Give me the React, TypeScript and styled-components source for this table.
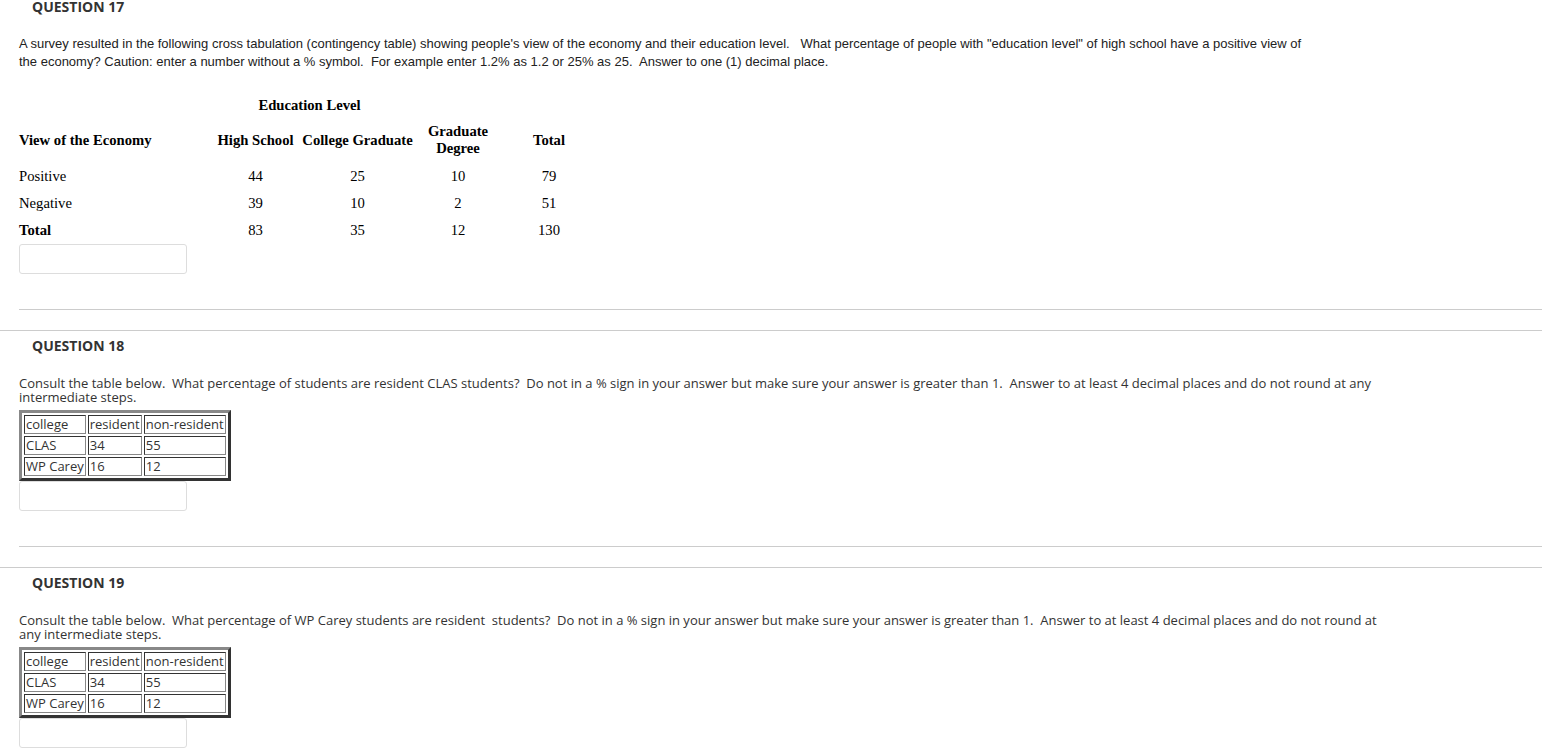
import React from 'react';
import styled, { createGlobalStyle } from 'styled-components';

const GlobalStyle = createGlobalStyle`
  body {
    margin: 0;
    background: #fff;
  }
`;

const Page = styled.div`
  margin-top: -9px;
  width: 1542px;
`;

const Block = styled.section`
  border-top: 1px solid #ccc;
  padding-top: 5px;
`;

const Heading = styled.h3`
  margin: 0 0 0 32px;
  font: 700 14px/19px 'Open Sans', sans-serif;
  color: #333;
`;

const Body = styled.div`
  padding-left: 19px;
`;

const Prompt = styled.p<{ $legacy?: boolean }>`
  margin: ${p => (p.$legacy ? '19px' : '21px')} 0 0;
  font: ${p =>
    p.$legacy
      ? "13px/18px 'Liberation Sans', Arial, sans-serif"
      : "13px/14px 'Open Sans', sans-serif"};
  color: ${p => (p.$legacy ? '#222' : '#333')};
`;

const EconGrid = styled.div`
  margin-top: 22px;
  display: grid;
  grid-template-columns: 194px 85px 119px 82px 100px;
  grid-template-rows: 24px 46px 27px 27px 27px;
  width: max-content;
  font: 14.67px/17px 'Liberation Serif', 'Times New Roman', serif;
  color: #000;
`;

const EconCell = styled.div<{ $left?: boolean; $bold?: boolean; $span?: number }>`
  display: flex;
  align-items: center;
  justify-content: ${p => (p.$left ? 'flex-start' : 'center')};
  text-align: ${p => (p.$left ? 'left' : 'center')};
  font-weight: ${p => (p.$bold ? 700 : 400)};
  grid-column: ${p => (p.$span ? `span ${p.$span}` : 'auto')};
`;

const EducationTitle = styled(EconCell)`
  padding-right: 11px;
`;

const CollegeTable = styled.table`
  margin-top: 6px;
  border-collapse: separate;
  border-spacing: 2px;
  border-style: solid;
  border-width: 3px;
  border-color: #888 #333 #333 #888;
  font: 13px/17px 'Open Sans', sans-serif;
  color: #333;
`;

const CollegeCell = styled.td`
  border-style: solid;
  border-width: 1px;
  border-color: #333 #888 #888 #333;
  padding: 0 1px;
  white-space: nowrap;
`;

const AnswerInput = styled.input`
  display: block;
  margin: 0;
  width: 168px;
  height: 30px;
  box-sizing: border-box;
  border: 1px solid #ddd;
  border-radius: 3px;
  background: #fff;
`;

const Rule = styled.div`
  margin: 35px 0 20px;
  border-top: 1px solid #ccc;
`;

const economyRows = [
  { label: 'Positive', values: ['44', '25', '10', '79'], bold: false },
  { label: 'Negative', values: ['39', '10', '2', '51'], bold: false },
  { label: 'Total', values: ['83', '35', '12', '130'], bold: true },
];

const collegeRows = [
  ['college', 'resident', 'non-resident'],
  ['CLAS', '34', '55'],
  ['WP Carey', '16', '12'],
];

const CollegeData = () => (
  <CollegeTable>
    <tbody>
      {collegeRows.map(row => (
        <tr key={row[0]}>
          {row.map((cell, i) => (
            <CollegeCell key={i}>{cell}</CollegeCell>
          ))}
        </tr>
      ))}
    </tbody>
  </CollegeTable>
);

const App = () => {
  return (
    <Page>
      <GlobalStyle />
      <Block>
        <Heading>QUESTION 17</Heading>
        <Body>
          <Prompt $legacy>
            A survey resulted in the following cross tabulation (contingency table) showing people's view of the economy and their education level.{'\u00a0\u00a0 '}What percentage of people with "education level" of high school have a positive view of
            <br />
            the economy? Caution: enter a number without a % symbol.{'\u00a0 '}For example enter 1.2% as 1.2 or 25% as 25.{'\u00a0 '}Answer to one (1) decimal place.
          </Prompt>
          <EconGrid>
            <EconCell />
            <EducationTitle $bold $span={2}>Education Level</EducationTitle>
            <EconCell $span={2} />
            <EconCell $left $bold>View of the Economy</EconCell>
            <EconCell $bold>High School</EconCell>
            <EconCell $bold>College Graduate</EconCell>
            <EconCell $bold>Graduate<br />Degree</EconCell>
            <EconCell $bold>Total</EconCell>
            {economyRows.map(row => (
              <React.Fragment key={row.label}>
                <EconCell $left $bold={row.bold}>{row.label}</EconCell>
                {row.values.map((v, i) => (
                  <EconCell key={i}>{v}</EconCell>
                ))}
              </React.Fragment>
            ))}
          </EconGrid>
          <AnswerInput type="text" aria-label="Answer for question 17" />
          <Rule />
        </Body>
      </Block>

      <Block>
        <Heading>QUESTION 18</Heading>
        <Body>
          <Prompt>
            Consult the table below.{'\u00a0 '}What percentage of students are resident CLAS students?{'\u00a0 '}Do not in a % sign in your answer but make sure your answer is greater than 1.{'\u00a0 '}Answer to at least 4 decimal places and do not round at any
            <br />
            intermediate steps.
          </Prompt>
          <CollegeData />
          <AnswerInput type="text" aria-label="Answer for question 18" />
          <Rule />
        </Body>
      </Block>

      <Block>
        <Heading>QUESTION 19</Heading>
        <Body>
          <Prompt>
            Consult the table below.{'\u00a0 '}What percentage of WP Carey students are resident{'\u00a0 '}students?{'\u00a0 '}Do not in a % sign in your answer but make sure your answer is greater than 1.{'\u00a0 '}Answer to at least 4 decimal places and do not round at
            <br />
            any intermediate steps.
          </Prompt>
          <CollegeData />
          <AnswerInput type="text" aria-label="Answer for question 19" />
          <Rule />
        </Body>
      </Block>
    </Page>
  );
};

export default App;
